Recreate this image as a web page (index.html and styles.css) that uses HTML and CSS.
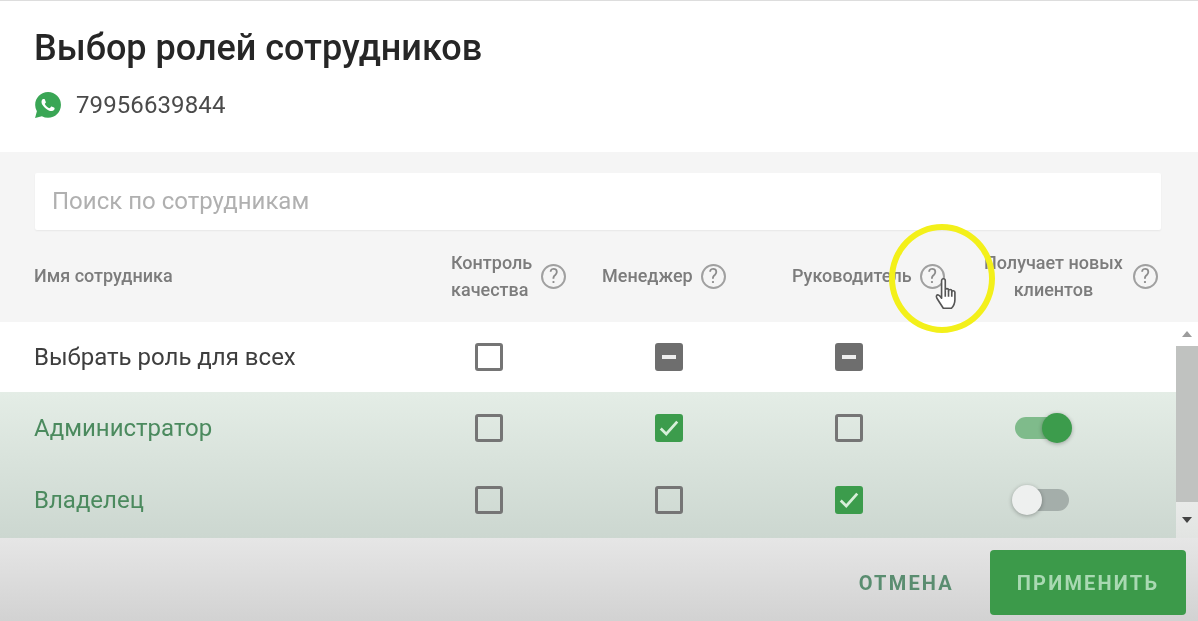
FILE: index.html
```html
<!DOCTYPE html>
<html lang="ru">
<head>
  <meta charset="UTF-8" />
  <title>Выбор ролей сотрудников</title>
  <link rel="stylesheet" href="styles.css">
</head>
<body>
  <div class="dialog">
    <div class="head">
      <h1>Выбор ролей сотрудников</h1>
      <div class="channel">
        <svg class="wa-icon" viewBox="0 0 24 24">
          <path fill="#3aa655" d="M.057 24l1.688-6.163A11.87 11.87 0 01.157 11.892C.16 5.335 5.495 0 12.05 0a11.82 11.82 0 018.413 3.488 11.82 11.82 0 013.48 8.413c-.003 6.558-5.339 11.893-11.893 11.893a11.88 11.88 0 01-5.688-1.448z"/>
          <path fill="#fff" d="M17.472 14.382c-.297-.149-1.758-.867-2.03-.967-.273-.099-.471-.148-.67.15-.197.297-.767.966-.94 1.164-.173.199-.347.223-.644.075-.297-.15-1.255-.463-2.39-1.475-.883-.788-1.48-1.761-1.653-2.059-.173-.297-.018-.458.13-.606.134-.133.298-.347.446-.52.149-.174.198-.298.298-.497.099-.198.05-.371-.025-.52-.075-.149-.669-1.612-.916-2.207-.242-.579-.487-.5-.669-.51-.173-.008-.371-.01-.57-.01-.198 0-.52.074-.792.372-.272.297-1.04 1.016-1.04 2.479 0 1.462 1.065 2.875 1.213 3.074.149.198 2.096 3.2 5.077 4.487.709.306 1.262.489 1.694.625.712.227 1.36.195 1.871.118.571-.085 1.758-.719 2.006-1.413.248-.694.248-1.289.173-1.413-.074-.124-.272-.198-.57-.347z"/>
        </svg>
        <span>79956639844</span>
      </div>
    </div>

    <div class="filters">
      <div class="search">Поиск по сотрудникам</div>
      <div class="columns">
        <div class="col-name">Имя сотрудника</div>
        <div class="col"><span>Контроль<br>качества</span><i class="hint">?</i></div>
        <div class="col"><span>Менеджер</span><i class="hint">?</i></div>
        <div class="col"><span>Руководитель</span><i class="hint">?</i></div>
        <div class="col col-last"><span>Получает новых<br>клиентов</span><i class="hint">?</i></div>
      </div>
    </div>

    <div class="table">
      <div class="rows">
        <div class="row row-all">
          <div class="name">Выбрать роль для всех</div>
          <div class="cell"><b class="box"></b></div>
          <div class="cell"><b class="box box-mixed"></b></div>
          <div class="cell"><b class="box box-mixed"></b></div>
          <div class="cell"></div>
        </div>
        <div class="group">
          <div class="row">
            <div class="name">Администратор</div>
            <div class="cell"><b class="box"></b></div>
            <div class="cell"><b class="box box-on"><svg viewBox="0 0 24 24"><path d="M3 12.5l6 6L21 5"/></svg></b></div>
            <div class="cell"><b class="box"></b></div>
            <div class="cell"><div class="toggle toggle-on"><em></em></div></div>
          </div>
          <div class="row">
            <div class="name">Владелец</div>
            <div class="cell"><b class="box"></b></div>
            <div class="cell"><b class="box"></b></div>
            <div class="cell"><b class="box box-on"><svg viewBox="0 0 24 24"><path d="M3 12.5l6 6L21 5"/></svg></b></div>
            <div class="cell"><div class="toggle"><em></em></div></div>
          </div>
        </div>
      </div>
      <div class="scrollbar">
        <div class="arrow arrow-up"></div>
        <div class="thumb"></div>
        <div class="arrow arrow-down"></div>
      </div>
    </div>

    <div class="footer">
      <button class="btn-cancel">Отмена</button>
      <button class="btn-apply">Применить</button>
    </div>
  </div>

  <!-- Подсветка курсора -->
  <div class="cursor-ring"></div>
  <svg class="cursor-hand" viewBox="0 0 24 30">
    <path d="M7 3.2c0-2.4 3.4-2.400 3.4 0v8.600c0-1.800 3-1.800 3 0v.8c0-1.700 3-1.700 3 .1v.9c0-1.600 2.900-1.500 2.900.3v6.600c0 3.600-2 6.900-3.200 8.100H8.600c-1.400-2.200-3-4.500-5.900-9.200-1.200-2-.1-3.400 1.300-3 1 .3 2 1.600 3 3z"/>
    <path d="M10.400 12v6M13.400 12.600V18M16.400 13.500V18"/>
  </svg>
</body>
</html>
```

FILE: styles.css
```css
* { box-sizing: border-box }
html, body { height: 100% }
body { margin: 0; font-family: Roboto, "Liberation Sans", sans-serif; background: #fff; overflow: hidden }

.dialog { height: 621px; display: flex; flex-direction: column; border-top: 1px solid #ddd; filter: blur(0.6px) }

.head { height: 151px; padding: 27px 34px 0; background: #fff }
h1 { margin: 0; font-size: 36px; line-height: 40px; font-weight: 500; color: #262626 }
.channel { display: flex; align-items: center; gap: 15px; margin-top: 22px; margin-left: 1px; font-size: 24px; letter-spacing: 0.1px; line-height: 30px; color: #4a4a4a }
.wa-icon { width: 26px; height: 26px }

.filters { height: 170px; padding: 21px 37px 0 35px; background: #f5f5f5 }
.search { height: 57px; padding: 0 17px; background: #fff; border-radius: 2px; box-shadow: 0 1px 2px rgba(0,0,0,0.06); font-size: 24px; line-height: 57px; color: #b0b0b0 }
.columns { display: grid; grid-template-columns: 417px 151px 190px 193px 1fr; align-items: center; height: 91px; margin-left: -1px; font-size: 18px; line-height: 27px; font-weight: 500; color: #7c7c7c }
.col { display: flex; align-items: center; gap: 8px }
.col:nth-child(2) { gap: 9px }
.col-last { gap: 10px; margin-left: -1px; text-align: center }
.hint { flex: none; display: block; width: 25px; height: 25px; margin-top: 2px; border: 2px solid #a0a0a0; border-radius: 50%; font-style: normal; font-size: 20px; font-weight: 400; line-height: 21px; text-align: center; color: #8c8c8c }

.table { height: 216px; display: flex; background: #fff }
.rows { flex: 1 }
.row { display: grid; grid-template-columns: 399px 180px 180px 180px 204px; align-items: center; height: 72px }
.row-all { height: 70px; background: #fff }
.group { height: 146px; background: linear-gradient(#e4ede6, #ccd7d0) }
.group .name { color: #4b8a5e }
.name { padding-left: 34px; font-size: 24px; color: #3e3e3e }
.cell { display: flex; justify-content: center }

.box { display: block; width: 28px; height: 28px; border: 3px solid #757575; border-radius: 3px }
.box-mixed { position: relative; background: #6e6e6e; border-color: #6e6e6e }
.box-mixed::after { content: ""; position: absolute; left: 4px; right: 4px; top: 9px; height: 4px; background: #eee }
.box-on { background: #3c9c4c; border-color: #3c9c4c }
.box-on svg { display: block; width: 22px; height: 22px }
.box-on path { fill: none; stroke: #d7efd9; stroke-width: 3 }

.toggle { position: relative; left: 1px; width: 54px; height: 22px; border-radius: 11px; background: #a4aeaa }
.toggle em { position: absolute; left: -3px; top: -4px; width: 30px; height: 30px; border-radius: 50%; background: #eef0ef; box-shadow: 0 1px 4px rgba(0,0,0,0.3) }
.toggle-on { background: #7fbb8b }
.toggle-on em { left: 27px; background: #3c9c4c }

.scrollbar { flex: none; width: 22px; display: flex; flex-direction: column; align-items: center; background: linear-gradient(#fff 30%, #e2e4e2) }
.arrow { flex: none; width: 0; height: 0; border-left: 5px solid transparent; border-right: 5px solid transparent }
.arrow-up { margin: 9px 0 9px; border-bottom: 6px solid #9c9c9c }
.arrow-down { margin: 15px 0 0; border-top: 6px solid #444 }
.thumb { width: 100%; height: 156px; background: #c0c2c0 }

.footer { flex: 1; display: flex; justify-content: flex-end; align-items: flex-start; padding: 12px 12px 0 0; background: linear-gradient(#e6e6e6, #d2d2d2) }
button { border: 0; font-family: inherit; font-size: 20px; font-weight: 700; letter-spacing: 2.2px; text-transform: uppercase }
.btn-cancel { height: 65px; margin-right: 36px; padding: 0; background: none; color: #5a8d70 }
.btn-apply { width: 196px; height: 65px; background: #3c9a4a; border-radius: 4px; color: #a9d9b2 }

.cursor-ring { position: absolute; left: 889px; top: 224px; width: 106px; height: 109px; border: 6px solid #f3f01a; border-radius: 50%; filter: blur(0.6px) }
.cursor-hand { position: absolute; left: 934px; top: 277px; width: 26px; height: 33px }
.cursor-hand path { fill: #fff; stroke: #555; stroke-width: 1.5; stroke-linejoin: round }
```
